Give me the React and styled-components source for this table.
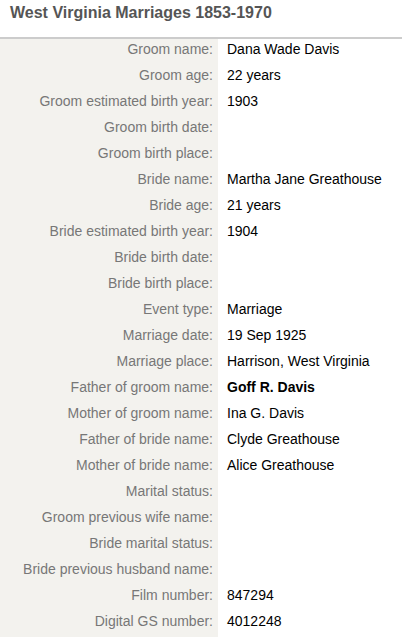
import React from "react";
import styled, { createGlobalStyle } from "styled-components";

const Global = createGlobalStyle`
  html, body { margin: 0; padding: 0; background: #ffffff; }
  body { font-family: "Liberation Sans", Arial, sans-serif; }
`;

const Page = styled.div`
  width: 402px;
`;

const Title = styled.h1`
  margin: 0 0 15px 0;
  padding: 3px 10px 0 10px;
  font-size: 16px;
  line-height: 19px;
  font-weight: bold;
  color: #555555;
`;

const Table = styled.div`
  border-top: 2px solid #cccccc;
  display: grid;
  grid-template-columns: 218px 1fr;
`;

const Label = styled.div`
  background: #f3f2ee;
  color: #777777;
  font-size: 14px;
  line-height: 16px;
  height: 26px;
  box-sizing: border-box;
  padding: 2px 5px 0 0;
  text-align: right;
  white-space: nowrap;
`;

const Value = styled.div`
  color: #000000;
  font-size: 14px;
  line-height: 16px;
  height: 26px;
  box-sizing: border-box;
  padding: 2px 0 0 9px;
  font-weight: ${(p) => (p.$bold ? "bold" : "normal")};
  white-space: nowrap;
`;

const rows = [
  ["Groom name:", "Dana Wade Davis"],
  ["Groom age:", "22 years"],
  ["Groom estimated birth year:", "1903"],
  ["Groom birth date:", ""],
  ["Groom birth place:", ""],
  ["Bride name:", "Martha Jane Greathouse"],
  ["Bride age:", "21 years"],
  ["Bride estimated birth year:", "1904"],
  ["Bride birth date:", ""],
  ["Bride birth place:", ""],
  ["Event type:", "Marriage"],
  ["Marriage date:", "19 Sep 1925"],
  ["Marriage place:", "Harrison, West Virginia"],
  ["Father of groom name:", "Goff R. Davis", true],
  ["Mother of groom name:", "Ina G. Davis"],
  ["Father of bride name:", "Clyde Greathouse"],
  ["Mother of bride name:", "Alice Greathouse"],
  ["Marital status:", ""],
  ["Groom previous wife name:", ""],
  ["Bride marital status:", ""],
  ["Bride previous husband name:", ""],
  ["Film number:", "847294"],
  ["Digital GS number:", "4012248"],
];

export default function App() {
  return (
    <Page>
      <Global />
      <Title>West Virginia Marriages 1853-1970</Title>
      <Table>
        {rows.map(([l, v, b]) => (
          <React.Fragment key={l}>
            <Label>{l}</Label>
            <Value $bold={b}>{v}</Value>
          </React.Fragment>
        ))}
      </Table>
    </Page>
  );
}
